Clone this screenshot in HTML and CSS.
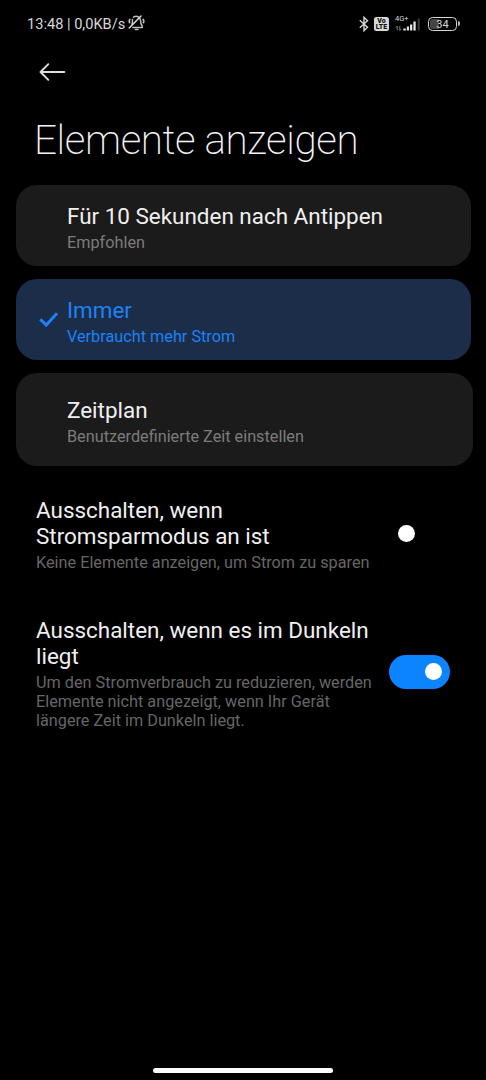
FILE: index.html
```html
<!DOCTYPE html>
<html lang="de">
<head>
<meta charset="utf-8">
<title>Elemente anzeigen</title>
<link rel="stylesheet" href="styles.css">
</head>
<body>
<div class="screen">
  <header class="status">
    <span class="status-text">13:48 | 0,0KB/s</span>
    <svg class="bell" width="17" height="16" viewBox="0 0 17 16" fill="none" stroke="#bdbdbd" stroke-width="1.5" stroke-linecap="round" stroke-linejoin="round">
      <path d="M5.500 2.200C8.500 .2 12.300 2 12.500 5.200C12.500 8.400 12.800 9.500 14.300 11.300V12.400H4.800M4 9.300C4.500 8 4.400 6.500 4.500 4.500"/>
      <path d="M7.300 14.500H10"/>
      <path d="M1.200 13L13 1" stroke="#ddd"/>
      <path d="M1.800 4.500Q.8 6 1.600 7.600M15.200 4.500Q16.200 6 15.400 7.600" stroke-width="1.700"/>
    </svg>
    <div class="status-icons">
      <svg width="10" height="16" viewBox="0 0 10 16" fill="none" stroke="#d6d6d6" stroke-width="1.400"><path d="M.8 4.300L8.500 11.300L5 14.700V1.300L8.500 4.700L.8 11.700"/></svg>
      <div class="volte"><span>Vo</span><span>LTE</span></div>
      <div class="signal">
        <span class="net">4G+</span>
        <svg width="27" height="14" viewBox="0 0 27 14">
          <path d="M2.200 13.500V9L.8 10.500M4.800 9V13.500L6.200 12" stroke="#888" stroke-width=".9" fill="none"/>
          <path d="M8.300 11.500H10.800V13.500H8.300ZM11.800 9.500H14V13.500H11.800ZM15 7.500H17.300V13.500H15ZM18.400 4.500H20.700V13.500H18.400Z" fill="#e2e2e2"/>
          <path d="M22.700 1.500H24.700V13.500H22.700Z" fill="#3c3c3c"/>
        </svg>
      </div>
      <div class="battery"><span>34</span></div>
    </div>
  </header>
  <nav class="nav">
    <svg width="28" height="20" viewBox="0 0 28 20" fill="none" stroke="#dedede" stroke-width="1.900" stroke-linecap="round" stroke-linejoin="round"><path d="M26.300 10H2.500M10.300 2.200L2.500 10L10.300 17.800"/></svg>
  </nav>
  <h1 class="heading">Elemente anzeigen</h1>
  <main>
    <section class="options">
      <div class="option">
        <div><div class="title">Für 10 Sekunden nach Antippen</div><div class="sub">Empfohlen</div></div>
      </div>
      <div class="option selected">
        <svg class="check" width="20" height="16" viewBox="0 0 20 16" fill="none" stroke="#1d82f5" stroke-width="3"><path d="M1.300 7.300L7.300 13L18 1.300"/></svg>
        <div><div class="title">Immer</div><div class="sub">Verbraucht mehr Strom</div></div>
      </div>
      <div class="option schedule">
        <div><div class="title">Zeitplan</div><div class="sub">Benutzerdefinierte Zeit einstellen</div></div>
      </div>
    </section>
    <section class="settings">
      <div class="setting">
        <div class="setting-text"><div class="title">Ausschalten, wenn<br>Stromsparmodus an ist</div><div class="sub">Keine Elemente anzeigen, um Strom zu sparen</div></div>
        <div class="toggle"><i></i></div>
      </div>
      <div class="setting">
        <div class="setting-text"><div class="title">Ausschalten, wenn es im Dunkeln<br>liegt</div><div class="sub">Um den Stromverbrauch zu reduzieren, werden<br>Elemente nicht angezeigt, wenn Ihr Gerät<br>längere Zeit im Dunkeln liegt.</div></div>
        <div class="toggle on"><i></i></div>
      </div>
    </section>
  </main>
  <div class="home-bar"></div>
</div>
</body>
</html>
```
FILE: styles.css
```css
* { box-sizing: border-box; }
body { margin: 0; background: #000; color: #f0f0f0; font-family: Roboto, "Noto Sans", sans-serif; }
.screen { width: 486px; height: 1080px; display: flex; flex-direction: column; overflow: hidden; }
.status { height: 47px; display: flex; align-items: center; padding: 0 29px 0 27px; color: #d8d8d8; }
.status-text { font-size: 14.6px; white-space: nowrap; }
.bell { margin-left: 3px; margin-bottom: 1px; }
.status-icons { margin-left: auto; display: flex; align-items: center; }
.volte { width: 15px; height: 14px; margin-left: 5px; border-radius: 2.5px; background: #d8d8d8; color: #111; display: flex; flex-direction: column; align-items: center; justify-content: center; font-size: 7px; font-weight: 900; }
.volte span { display: block; height: 6px; line-height: 6px; }
.signal { width: 27px; height: 14px; margin: 0 6px; position: relative; }
.signal svg { display: block; }
.net { position: absolute; left: 0; top: -2px; font-size: 7.5px; line-height: 8px; }
.battery { width: 29px; height: 14px; border: 1.5px solid #d8d8d8; border-radius: 4.5px; position: relative; background: linear-gradient(90deg, #444 9px, transparent 9px) content-box; padding: 1px; font-size: 11px; line-height: 11px; text-align: center; }
.battery::after { content: ""; position: absolute; right: -4px; top: 3px; width: 2px; height: 5px; border-radius: 0 2px 2px 0; background: #bbb; }
.nav { height: 50px; padding: 15px 38px 0; }
.nav svg { display: block; }
.heading { margin: 0; height: 88px; padding: 20px 0 0 34px; font-size: 40.4px; letter-spacing: -.4px; line-height: 48px; font-weight: 200; white-space: nowrap; color: #f4f4f4; }
.options { display: flex; flex-direction: column; gap: 13px; padding: 0 13px 0 16px; }
.option { position: relative; width: 455px; height: 81px; padding: 4px 0 0 51px; border-radius: 21px; background: #1b1b1b; display: flex; align-items: center; }
.option.selected { background: #1b2d48; color: #1d82f5; }
.option.schedule { width: 457px; height: 93px; }
.check { position: absolute; left: 23px; top: 33px; }
.title { font-size: 22.45px; line-height: 26px; white-space: nowrap; }
.sub { font-size: 16.25px; line-height: 19px; margin-top: 4px; color: #7c7c7c; white-space: nowrap; }
.selected .sub { color: #1d82f5; }
.settings { padding: 31px 36px 0; display: flex; flex-direction: column; gap: 45px; }
.setting { display: flex; justify-content: space-between; align-items: center; }
.setting .sub { color: #666; }
.setting-text { width: 340px; }
.toggle { width: 61px; height: 34px; margin-bottom: 3px; border-radius: 17px; padding: 0 8px 0 9px; display: flex; align-items: center; }
.toggle i { width: 17px; height: 17px; border-radius: 50%; background: #fff; }
.toggle.on { margin-bottom: 4px; background: #0d84ff; justify-content: flex-end; }
.home-bar { width: 180px; height: 5px; border-radius: 3px; background: #fff; margin: auto auto 7.500px; }
```
